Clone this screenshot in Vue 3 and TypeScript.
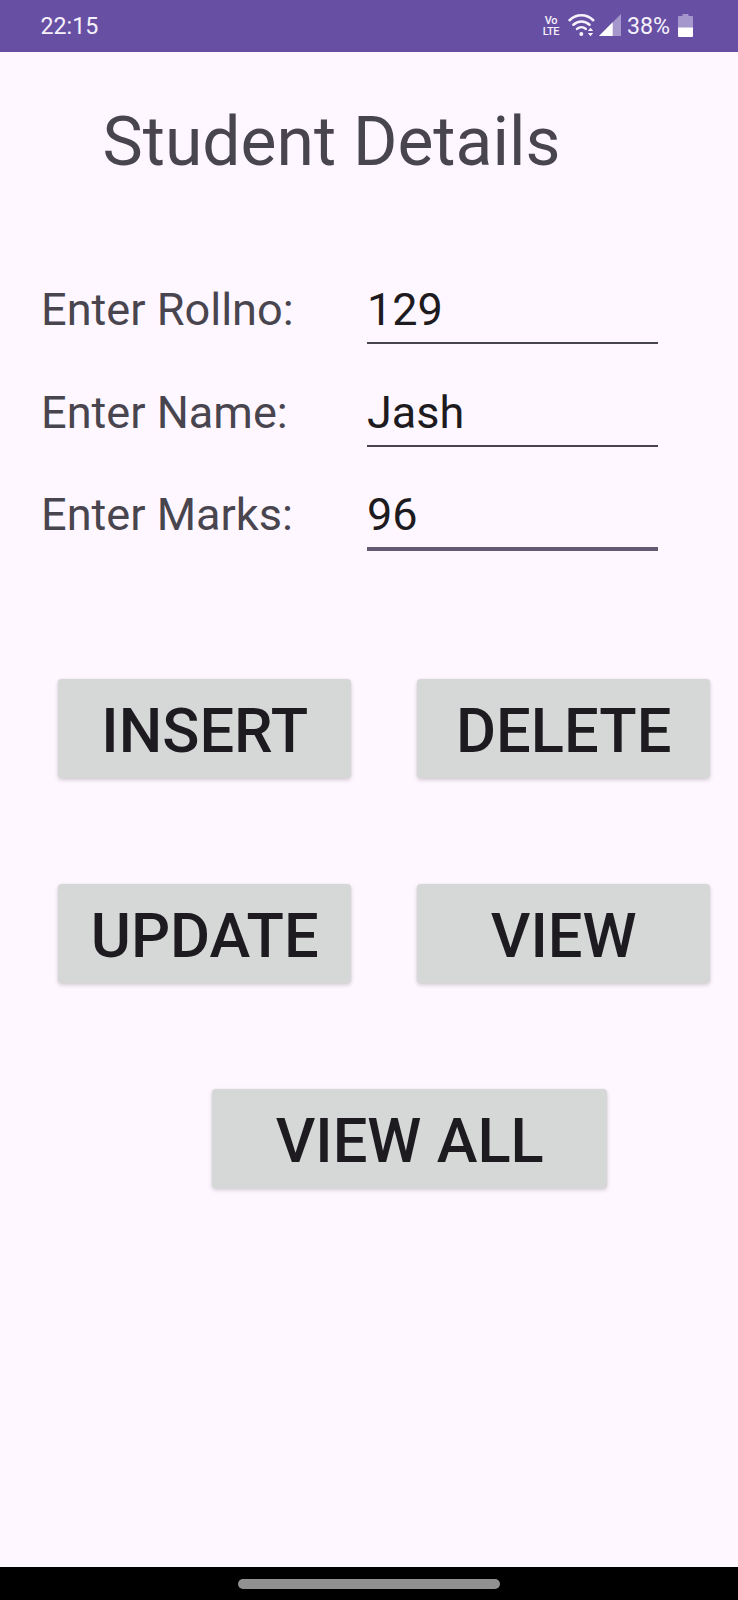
<script setup lang="ts">
import { reactive } from 'vue'

interface Field {
  id: string
  label: string
  value: string
  active: boolean
}

const fields = reactive<Field[]>([
  { id: 'rollno', label: 'Enter Rollno:', value: '129', active: false },
  { id: 'name', label: 'Enter Name:', value: 'Jash', active: false },
  { id: 'marks', label: 'Enter Marks:', value: '96', active: true },
])

const actions: string[] = ['INSERT', 'DELETE', 'UPDATE', 'VIEW']
</script>

<template>
  <div class="screen">
    <header class="status">
      <span class="clock">22:15</span>
      <span class="volte"><span>Vo</span><span>LTE</span></span>
      <svg class="wifi" viewBox="0 0 27 24" width="27" height="24" fill="none" stroke="#f6f1fb" stroke-linecap="round">
        <path d="M1.600 7.200C8.400.6 18.400.6 25.200 7.200" stroke-width="2.600" />
        <path d="M5.400 11.700c4.800-4.300 11.400-4.300 16.100 0" stroke-width="2.600" />
        <path d="M9 15.900c2.700-2.300 6.300-2.300 8.800 0" stroke-width="2.500" />
        <circle cx="13.300" cy="20.900" r="2" fill="#f6f1fb" stroke="none" />
        <path d="M19.800 18 22.500 14.800 25.200 18zM19.800 20 22.500 23.200 25.200 20z" fill="#f6f1fb" stroke="none" />
      </svg>
      <svg class="signal" viewBox="0 0 22 22" width="22" height="22">
        <path d="M22 0V22H0z" fill="#a596cb" />
        <path d="M13.7 8.3V22H0z" fill="#fff" />
      </svg>
      <span class="percent">38%</span>
      <svg class="battery" viewBox="0 0 15 23" width="15" height="23">
        <path d="M4.5 0h6v2H14a1 1 0 0 1 1 1v11H0V3a1 1 0 0 1 1-1h3.500z" fill="#a596cb" />
        <path d="M0 13.500h15V22a1 1 0 0 1-1 1H1a1 1 0 0 1-1-1z" fill="#fff" />
      </svg>
    </header>

    <main class="content">
      <h1 class="title">Student Details</h1>

      <form class="form" @submit.prevent>
        <div v-for="field in fields" :key="field.id" class="row">
          <label class="label" :for="field.id">{{ field.label }}</label>
          <input :id="field.id" v-model="field.value" class="input" :class="{ active: field.active }" type="text" autocomplete="off" spellcheck="false" />
        </div>
      </form>

      <div class="actions">
        <button v-for="action in actions" :key="action" class="button" type="button">{{ action }}</button>
      </div>
      <button class="button wide" type="button">VIEW ALL</button>
    </main>

    <footer class="navigation"><span class="handle"></span></footer>
  </div>
</template>

<style>
body {
  margin: 0;
}
</style>

<style scoped>
.screen {
  width: 738px;
  height: 1600px;
  display: flex;
  flex-direction: column;
  overflow: hidden;
  background: #fef7ff;
  font-family: Roboto, 'Liberation Sans', sans-serif;
}

.status {
  box-sizing: border-box;
  flex: none;
  display: flex;
  height: 52px;
  padding: 0 45px 0 40.5px;
  align-items: flex-start;
  background: #6750a4;
  color: #f6f1fb;
  font-size: 23.2px;
  line-height: 52px;
}

.clock {
  flex: 1;
}

.volte {
  display: flex;
  flex-direction: column;
  align-items: center;
  width: 17px;
  margin: 15px 8.500px 0 0;
  font-size: 11px;
  font-weight: 500;
  letter-spacing: -0.4px;
  line-height: 11px;
}

.wifi {
  margin: 13px 4px 0 0;
}

.signal {
  margin: 14px 6px 0 0;
}

.percent {
  width: 44px;
  margin-right: 7px;
}

.battery {
  margin-top: 13.500px;
}

.content {
  flex: 1;
}

.title {
  margin: 49.500px 0 0 102.500px;
  color: #49454f;
  font-size: 67.800px;
  font-weight: 400;
  line-height: 80px;
}

.form {
  padding: 97.500px 0 0 41px;
}

.row {
  display: grid;
  grid-template-columns: 326px 291px;
  align-items: start;
  height: 102.500px;
}

.label {
  color: #49454f;
  font-size: 45.100px;
  line-height: 62px;
  white-space: nowrap;
}

.input {
  box-sizing: border-box;
  width: 291px;
  height: 65px;
  padding: 0 0 2px;
  border: 0;
  border-bottom: 2px solid #49454f;
  border-radius: 0;
  outline: 0;
  background: transparent;
  color: #1d1b20;
  font: 400 45px/61px Roboto, 'Liberation Sans', sans-serif;
}

.input.active {
  height: 67px;
  border-bottom: 4px solid #625b71;
}

.actions {
  display: grid;
  grid-template-columns: 293px 293px;
  gap: 106.500px 66px;
  padding: 92.500px 0 0 58.2px;
}

.button {
  display: block;
  height: 98.500px;
  padding: 6px 0 0;
  border: 0;
  border-radius: 4px;
  background: #d6d8d7;
  box-shadow: 0 2px 4px rgba(0, 0, 0, 0.18), 0 0 2px rgba(0, 0, 0, 0.06);
  color: #1d1b20;
  font: 500 61.400px/92px Roboto, 'Liberation Sans', sans-serif;
  white-space: nowrap;
}

.wide {
  width: 395px;
  margin: 106.500px 0 0 212.2px;
}

.navigation {
  flex: none;
  display: flex;
  justify-content: center;
  height: 33px;
  background: #000;
}

.handle {
  width: 262px;
  height: 10px;
  margin-top: 12px;
  border-radius: 5px;
  background: #919191;
}
</style>
